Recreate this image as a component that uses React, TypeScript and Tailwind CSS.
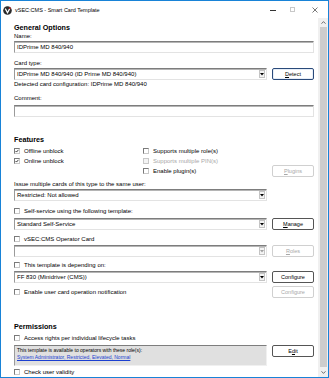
import React from "react";

const T = "text-[6px] leading-[8px] text-black whitespace-nowrap";

function Check({ label, checked = false, disabled = false }: { label: string; checked?: boolean; disabled?: boolean }) {
  return (
    <div className="flex items-center h-[10px]">
      <div
        className={
          "w-[6px] h-[6px] border-t border-l border-r border-b flex items-center justify-center " +
          (disabled ? "border-[#c8c8c8] bg-[#f4f4f4]" : "border-t-[#7a7a7a] border-l-[#7a7a7a] border-r-[#c8c8c8] border-b-[#c8c8c8] bg-white")
        }
      >
        {checked && (
          <svg width="6" height="6" viewBox="0 0 6 6">
            <path d="M0.8 3 L2.3 4.6 L5.2 1.2" stroke="#000" strokeWidth="1.1" fill="none" />
          </svg>
        )}
      </div>
      <span className={"ml-[4px] text-[6px] leading-[8px] whitespace-nowrap " + (disabled ? "text-[#a8a8a8]" : "text-black")}>{label}</span>
    </div>
  );
}

function Input({ value = "" }: { value?: string }) {
  return (
    <div className="h-[12px] w-full bg-white border border-t-[#7d7d7d] border-l-[#9a9a9a] border-r-[#e3e3e3] border-b-[#e3e3e3] shadow-[inset_0_1px_0_#b5b5b5] flex items-center pl-[2px]">
      <span className={T}>{value}</span>
    </div>
  );
}

function Select({ value = "", disabled = false }: { value?: string; disabled?: boolean }) {
  return (
    <div className="h-[12px] w-[253px] shrink-0 bg-white border border-t-[#7d7d7d] border-l-[#9a9a9a] border-r-[#e3e3e3] border-b-[#e3e3e3] shadow-[inset_0_1px_0_#b5b5b5] flex items-center pl-[2px] pr-[1px]">
      <span className={T + " flex-1"}>{value}</span>
      <div className="w-[6px] h-[8px] border border-[#c4c4c4] bg-[#f4f4f4] flex items-center justify-center">
        <svg width="4" height="3" viewBox="0 0 4 3">
          <path d="M0 0 L4 0 L2 2.5 Z" fill={disabled ? "#a0a0a0" : "#000"} />
        </svg>
      </div>
    </div>
  );
}

function Btn({ children, disabled = false, focused = false }: { children: React.ReactNode; disabled?: boolean; focused?: boolean }) {
  return (
    <div
      className={
        "w-[42px] h-[12px] shrink-0 rounded-[2px] border flex items-center justify-center text-[5.5px] leading-[8px] " +
        (disabled
          ? "border-[#d0d0d0] text-[#a8a8a8] bg-white"
          : focused
          ? "border-[#2a4a7a] text-black bg-white shadow-[inset_0_0_0_1px_#e6eef8]"
          : "border-[#555] text-black bg-white")
      }
    >
      {children}
    </div>
  );
}

function Heading({ children, className = "" }: { children: React.ReactNode; className?: string }) {
  return <div className={"text-[7.2px] leading-[8px] font-bold text-black whitespace-nowrap " + className}>{children}</div>;
}

export default function App() {
  return (
    <div className="w-[329px] h-[378px] bg-white border border-[#1883d7] flex flex-col overflow-hidden font-['Liberation_Sans',Arial,sans-serif]">
      {/* Title bar */}
      <div className="h-[17px] shrink-0 flex items-center pl-[2px]">
        <svg width="9" height="9" viewBox="0 0 9 9" className="mt-[1px]">
          <circle cx="4.5" cy="4.5" r="4.3" fill="#2a2a2a" />
          <path d="M2.3 2.6 L4.5 6.8 L6.7 2.6" stroke="#fff" strokeWidth="1.2" fill="none" />
          <circle cx="6.9" cy="2.2" r="0.9" fill="#d02020" />
        </svg>
        <span className="ml-[3px] text-[5.5px] leading-[8px] text-black whitespace-nowrap">vSEC:CMS - Smart Card Template</span>
        <div className="flex-1" />
        <div className="w-[6px] h-[1px] bg-[#333] mr-[14px] mt-[1px]" />
        <div className="w-[5px] h-[5px] border border-[#c8c8c8] mr-[17px]" />
        <svg width="6" height="6" viewBox="0 0 6 6" className="mr-[10px]">
          <path d="M0.5 0.5 L5.5 5.5 M5.5 0.5 L0.5 5.5" stroke="#555" strokeWidth="0.8" />
        </svg>
      </div>

      {/* Body */}
      <div className="flex flex-1 min-h-0">
        <div className="w-[317px] pl-[13px] pr-[4px] flex flex-col">
          <Heading className="mt-[6px]">General Options</Heading>
          <div className={T}>Name:</div>
          <div className="mt-[1px]">
            <Input value="IDPrime MD 840/940" />
          </div>
          <div className={T + " mt-[6px]"}>Card type:</div>
          <div className="flex gap-[5px] mt-[1px]">
            <Select value="IDPrime MD 840/940 (ID Prime MD 840/940)" />
            <Btn focused>
              <span><span className="underline">D</span>etect</span>
            </Btn>
          </div>
          <div className={T + " mt-[0px]"}>Detected card configuration: IDPrime MD 840/940</div>
          <div className={T + " mt-[6px]"}>Comment:</div>
          <div className="mt-[3px]">
            <Input />
          </div>

          <Heading className="mt-[19px]">Features</Heading>
          <div className="flex mt-[2px]">
            <div className="w-[129px] flex flex-col">
              <Check label="Offline unblock" checked />
              <Check label="Online unblock" checked />
            </div>
            <div className="flex-1 flex flex-col">
              <Check label="Supports multiple role(s)" />
              <Check label="Supports multiple PIN(s)" disabled />
              <div className="flex items-center justify-between h-[10px]">
                <Check label="Enable plugin(s)" />
                <Btn disabled>
                  <span><span className="underline">P</span>lugins</span>
                </Btn>
              </div>
            </div>
          </div>

          <div className={T + " mt-[4px]"}>Issue multiple cards of this type to the same user:</div>
          <div className="mt-[1px]">
            <Select value="Restricted: Not allowed" />
          </div>

          <div className="mt-[5px]">
            <Check label="Self-service using the following template:" />
          </div>
          <div className="flex gap-[5px] mt-[2px]">
            <Select value="Standard Self-Service" />
            <Btn>
              <span><span className="underline">M</span>anage</span>
            </Btn>
          </div>

          <div className="mt-[4px]">
            <Check label="vSEC:CMS Operator Card" />
          </div>
          <div className="flex gap-[5px] mt-[1px]">
            <Select disabled />
            <Btn disabled>
              <span><span className="underline">R</span>oles</span>
            </Btn>
          </div>

          <div className="mt-[3px]">
            <Check label="This template is depending on:" />
          </div>
          <div className="flex gap-[5px] mt-[1px]">
            <Select value="FF 830 (Minidriver (CMS))" />
            <Btn>Configure</Btn>
          </div>

          <div className="flex items-center justify-between h-[12px] mt-[3px]">
            <Check label="Enable user card operation notification" />
            <Btn disabled>Configure</Btn>
          </div>

          <Heading className="mt-[25px]">Permissions</Heading>
          <div className="mt-[2px]">
            <Check label="Access rights per individual lifecycle tasks" />
          </div>
          <div className="flex gap-[5px] mt-[2px]">
            <div className="w-[253px] h-[21px] shrink-0 bg-[#e0e0e0] border border-t-[#7d7d7d] border-l-[#9a9a9a] border-r-[#f0f0f0] border-b-[#f0f0f0] pl-[2px] pt-[1px] flex flex-col">
              <span className="text-[5px] leading-[7px] text-black whitespace-nowrap">This template is available to operators with these role(s):</span>
              <span className="text-[5px] leading-[7px] text-[#1a3fd0] underline whitespace-nowrap">System Administrator, Restricted, Elevated, Normal</span>
            </div>
            <Btn>
              <span>E<span className="underline">d</span>it</span>
            </Btn>
          </div>
          <div className="mt-[1px]">
            <Check label="Check user validity" />
          </div>
        </div>

        {/* Scrollbar */}
        <div className="w-[10px] bg-[#f0f0f0] flex flex-col items-center">
          <div className="h-[9px] flex items-center justify-center">
            <svg width="5" height="3" viewBox="0 0 5 3">
              <path d="M0.5 2.7 L2.5 0.6 L4.5 2.7" stroke="#606060" strokeWidth="0.9" fill="none" />
            </svg>
          </div>
          <div className="w-[7px] flex-1 bg-[#cdcdcd] mb-[1px]" />
          <div className="h-[9px] flex items-center justify-center">
            <svg width="5" height="3" viewBox="0 0 5 3">
              <path d="M0.5 0.3 L2.5 2.4 L4.5 0.3" stroke="#606060" strokeWidth="0.9" fill="none" />
            </svg>
          </div>
        </div>
      </div>
    </div>
  );
}
